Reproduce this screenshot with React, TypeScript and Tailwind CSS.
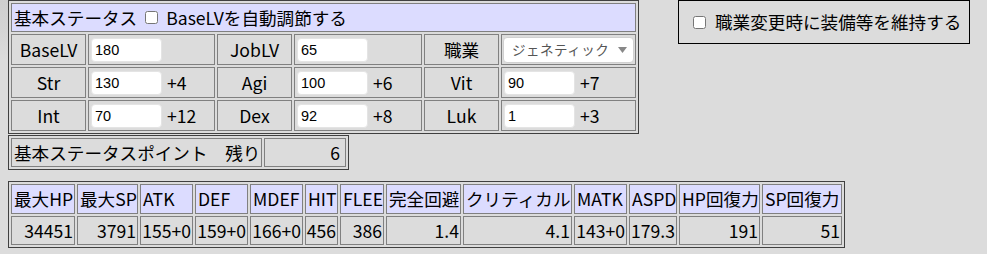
import React from "react";

const lbl = "border border-[#808080] flex items-center justify-center";
const inpCell = "border border-[#808080] flex items-center pl-[2px] gap-[5px]";
const inp =
  "w-[71px] h-[24px] bg-white rounded-[4px] border border-[#e4e4e4] pl-[3px] text-[14.5px] font-['Liberation_Sans',Arial,sans-serif] text-black outline-none";

function NumInput({ v }: { v: string }) {
  return <input className={inp} defaultValue={v} />;
}

const heads = [
  "最大HP",
  "最大SP",
  "ATK",
  "DEF",
  "MDEF",
  "HIT",
  "FLEE",
  "完全回避",
  "クリティカル",
  "MATK",
  "ASPD",
  "HP回復力",
  "SP回復力",
];
const vals = ["34451", "3791", "155+0", "159+0", "166+0", "456", "386", "1.4", "4.1", "143+0", "179.3", "191", "51"];

export default function App() {
  return (
    <div className="relative w-[987px] h-[254px] bg-[#dcdcdc] text-black text-[17.6px] leading-none font-['Noto_Sans_CJK_JP','Noto_Sans',sans-serif] pl-[8px] overflow-hidden">
      <div className="absolute left-0 top-0 w-[8px] h-[60px] bg-gradient-to-b from-[#cfcfcf] via-[#d4d4d4] to-[#dcdcdc]" />
      <div className="flex items-start">
        <div className="w-[631px] border border-[#404040] p-[2px] grid grid-cols-[75px_127px_75px_128px_75px_135px] grid-rows-[29px_31px_31px_31px] gap-[2px]">
          <div className="col-span-6 border border-[#808080] bg-[#dcdcff] flex items-center pl-[2px]">
            <span>基本ステータス</span>
            <input type="checkbox" className="ml-[8px] mr-[8px] w-[13px] h-[13px]" />
            <span>BaseLVを自動調節する</span>
          </div>

          <div className={lbl}>BaseLV</div>
          <div className={inpCell}>
            <NumInput v="180" />
          </div>
          <div className={lbl}>JobLV</div>
          <div className={inpCell}>
            <NumInput v="65" />
          </div>
          <div className={lbl}>職業</div>
          <div className="border border-[#808080] flex items-center pl-[1px]">
            <div className="w-[131px] h-[26px] bg-white rounded-[4px] border border-[#d0d0d0] flex items-center justify-between pl-[8px] pr-[6px] text-[13.5px] text-[#555] font-['Noto_Sans_CJK_JP',sans-serif] tracking-[0.5px]">
              <span>ジェネティック</span>
              <svg width="9" height="6" viewBox="0 0 9 6">
                <path d="M0 0 L9 0 L4.5 6 Z" fill="#888" />
              </svg>
            </div>
          </div>

          <div className={lbl}>Str</div>
          <div className={inpCell}>
            <NumInput v="130" />
            <span>+4</span>
          </div>
          <div className={lbl}>Agi</div>
          <div className={inpCell}>
            <NumInput v="100" />
            <span>+6</span>
          </div>
          <div className={lbl}>Vit</div>
          <div className={inpCell}>
            <NumInput v="90" />
            <span>+7</span>
          </div>

          <div className={lbl}>Int</div>
          <div className={inpCell}>
            <NumInput v="70" />
            <span>+12</span>
          </div>
          <div className={lbl}>Dex</div>
          <div className={inpCell}>
            <NumInput v="92" />
            <span>+8</span>
          </div>
          <div className={lbl}>Luk</div>
          <div className={inpCell}>
            <NumInput v="1" />
            <span>+3</span>
          </div>
        </div>

        <div className="ml-[39px] w-[292px] h-[44px] border border-black flex items-center pl-[14px]">
          <input type="checkbox" className="w-[13px] h-[13px] mr-[9px]" />
          <span>職業変更時に装備等を維持する</span>
        </div>
      </div>

      <div className="mt-[1px] w-[341px] h-[35px] border border-[#404040] p-[2px] grid grid-cols-[251px_82px] gap-[2px]">
        <div className="border border-[#808080] flex items-center pl-[2px] whitespace-nowrap">基本ステータスポイント　残り</div>
        <div className="border border-[#808080] flex items-center justify-end pr-[5px]">6</div>
      </div>

      <div className="mt-[11px] w-[837px] border border-[#404040] p-[2px] grid grid-cols-[64px_61px_53px_53px_53px_33px_44px_75px_109px_53px_48px_81px_80px] grid-rows-[30px_29px] gap-[2px]">
        {heads.map((h) => (
          <div key={h} className="border border-[#808080] bg-[#dcdcff] flex items-center pl-[2px] whitespace-nowrap">
            {h}
          </div>
        ))}
        {vals.map((v, i) => (
          <div key={i} className="border border-[#808080] flex items-center justify-end pr-[1px] whitespace-nowrap">
            {v}
          </div>
        ))}
      </div>
    </div>
  );
}
